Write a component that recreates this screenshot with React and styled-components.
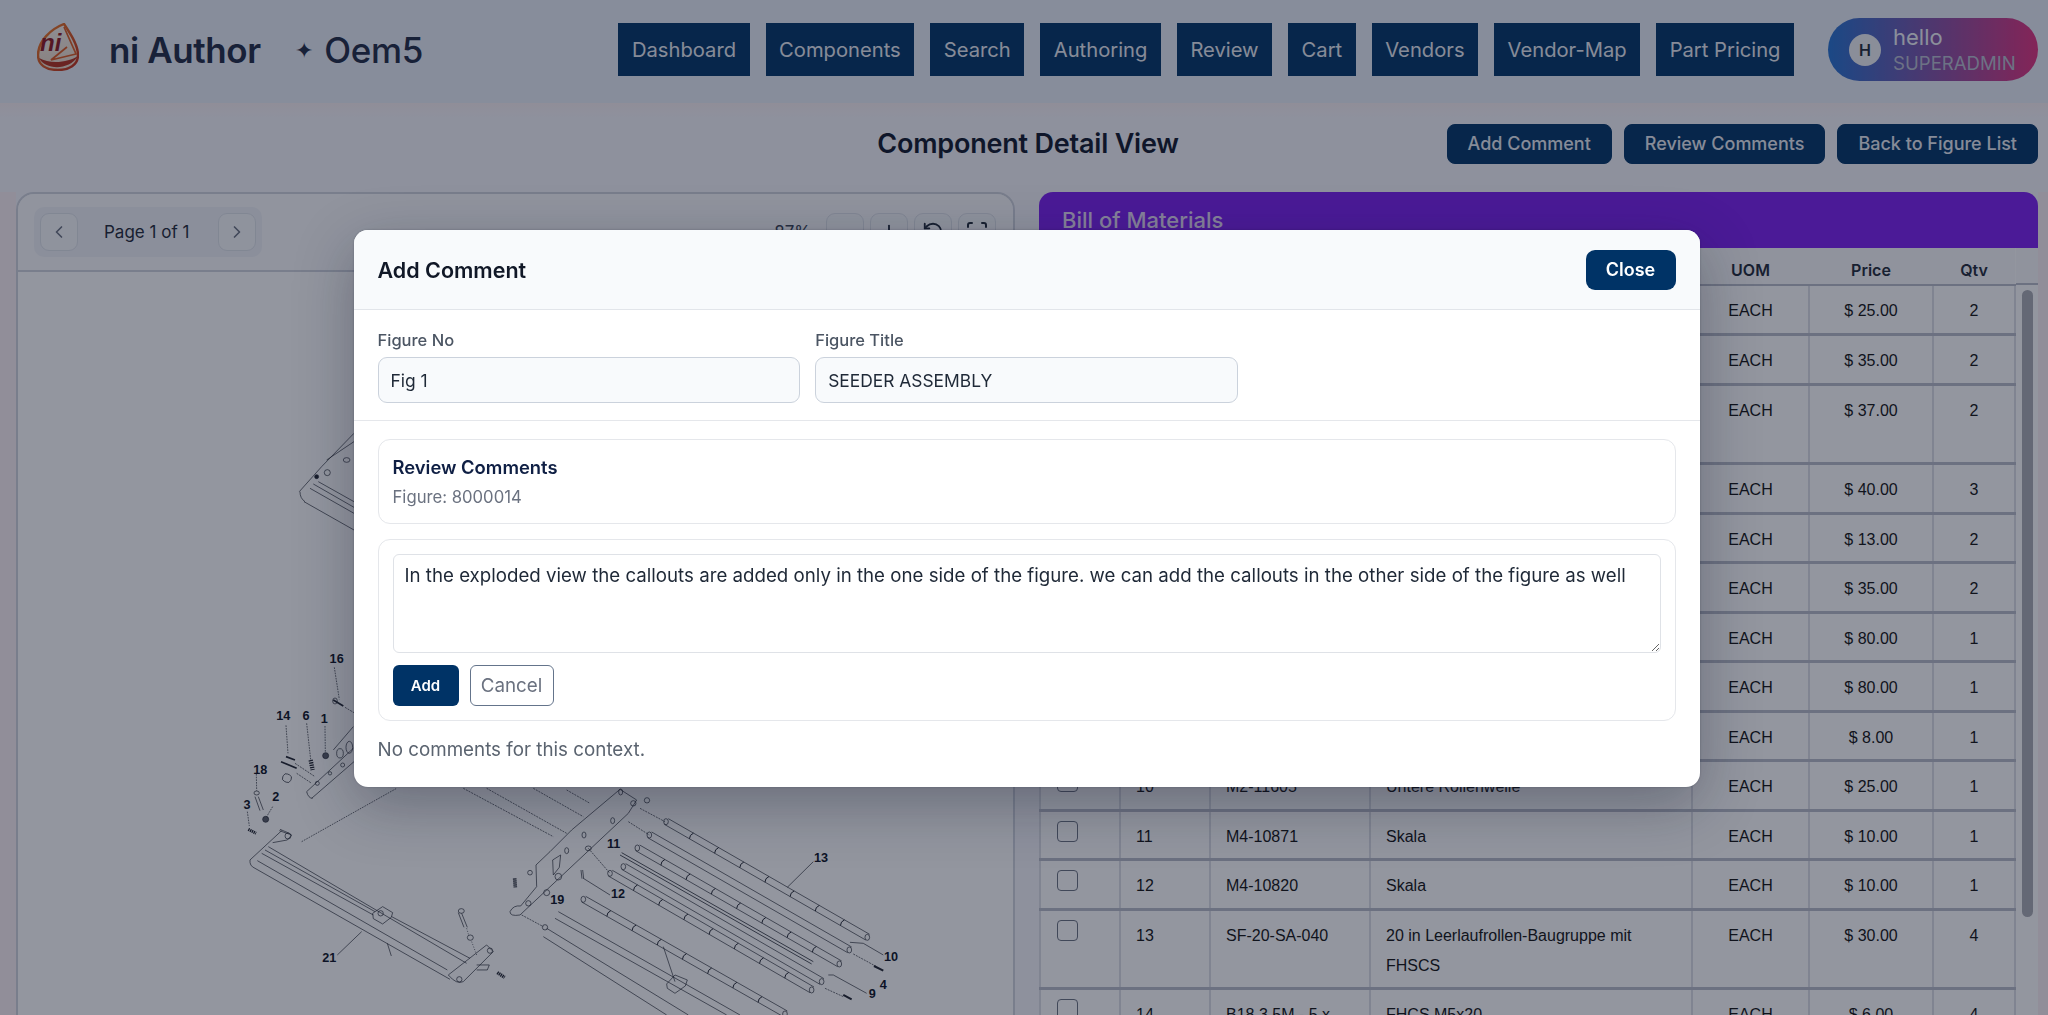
import React from "react";
import styled, { createGlobalStyle } from "styled-components";
import { ChevronLeft, ChevronRight, Minus, Plus, RotateCcw, ScanLine } from "lucide-react";

const GlobalStyle = createGlobalStyle`
  html, body {
    margin: 0;
    height: 100%;
    overflow: hidden;
    background: #fbf1f5;
    font-family: "Inter", "Liberation Sans", sans-serif;
    color: #111827;
  }
  * { box-sizing: border-box; }
`;

const Page = styled.div`
  height: 1015px;
  overflow: hidden;
`;

const Header = styled.header`
  display: flex;
  align-items: center;
  height: 103px;
  padding: 0 10px 4px 37px;
  background: #e9eef7;
`;

const Brand = styled.div`
  display: flex;
  align-items: center;
  flex: 1;
`;

const LogoMark = styled.svg`
  margin-top: -5px;
`;

const BrandName = styled.span`
  margin-left: 30px;
  font-size: 35px;
  font-weight: 600;
  letter-spacing: -0.4px;
  color: #1f2a44;
`;

const Tenant = styled.span`
  display: flex;
  align-items: center;
  gap: 12px;
  margin-left: 34px;
  font-size: 35px;
  font-weight: 500;
  letter-spacing: -0.4px;
  color: #1f2a44;
`;

const TenantStar = styled.span`
  font-size: 22px;
`;

const Nav = styled.nav`
  display: flex;
  gap: 16px;
  margin-right: 34px;
`;

const NavItem = styled.a`
  display: flex;
  align-items: center;
  height: 53px;
  padding: 0 13.5px;
  background: #003366;
  font-size: 20.2px;
  color: #e8ebf2;
`;

const UserPill = styled.div`
  display: flex;
  align-items: center;
  gap: 12px;
  width: 210px;
  height: 63px;
  padding-left: 21px;
  border-radius: 32px;
  background: linear-gradient(90deg, #2572d0 0%, #e2317d 100%);
`;

const Avatar = styled.span`
  display: flex;
  align-items: center;
  justify-content: center;
  width: 32px;
  height: 32px;
  border-radius: 50%;
  background: #eef0f4;
  font-size: 16px;
  font-weight: 600;
  color: #1f2937;
`;

const UserText = styled.div`
  display: flex;
  flex-direction: column;
`;

const UserName = styled.span`
  font-size: 22px;
  line-height: 27px;
  color: #f1f3f8;
`;

const UserRole = styled.span`
  font-size: 18.6px;
  line-height: 25px;
  color: #b9bdd0;
`;

const Main = styled.main`
  padding: 0 10px 0 16px;
`;

const TitleRow = styled.div`
  display: grid;
  grid-template-columns: 1fr auto 1fr;
  align-items: center;
  height: 89px;
  margin: 0 -10px 0 -16px;
  padding: 0 10px 8px 16px;
  background: linear-gradient(180deg, #f9f0f3 0, #f6f6fb 14px);
`;

const PageTitle = styled.h1`
  grid-column: 2;
  margin: 0 0 0 2px;
  font-size: 27px;
  font-weight: 600;
  letter-spacing: -0.2px;
  color: #0f172a;
`;

const TitleActions = styled.div`
  display: flex;
  justify-content: flex-end;
  gap: 12px;
`;

const ActionButton = styled.button`
  height: 40px;
  padding: 0 20px;
  border: 1px solid #003366;
  border-radius: 8px;
  background: #003366;
  font: 500 18px "Inter", sans-serif;
  color: #e8ebf2;
`;

const Columns = styled.div`
  display: grid;
  grid-template-columns: 999px 999px;
  gap: 24px;
  background: #f6f6fb;
`;

const ViewerPanel = styled.section`
  height: 830px;
  border: 2px solid #cfd3dd;
  border-radius: 18px 18px 0 0;
  background: #fff;
  box-shadow: inset 0 0 0 1px #e6e8ee;
  overflow: hidden;
`;

const ViewerToolbar = styled.div`
  display: flex;
  align-items: center;
  justify-content: space-between;
  height: 78px;
  padding: 0 17px 0 16px;
  border-bottom: 2px solid #cfd3dd;
  background: #fbfbfd;
`;

const Pager = styled.div`
  display: flex;
  align-items: center;
  gap: 26px;
  height: 50px;
  padding: 0 6px;
  border-radius: 10px;
  background: #f1f3f8;
`;

const PagerLabel = styled.span`
  width: 88px;
  font-size: 17px;
  white-space: nowrap;
  color: #1f2937;
`;

const IconButton = styled.button`
  display: flex;
  align-items: center;
  justify-content: center;
  width: 38px;
  height: 38px;
  padding: 0;
  border: 1.5px solid #dfe3ea;
  border-radius: 9px;
  background: #f8f9fc;
  color: #1f2937;
`;

const ZoomTools = styled.div`
  display: flex;
  align-items: center;
  gap: 6px;
`;

const ZoomValue = styled.span`
  margin-right: 9px;
  font-size: 17px;
  color: #374151;
`;

const DrawingCanvas = styled.div`
  height: 750px;
  background: #fff;
`;

const BomPanel = styled.section`
  height: 830px;
  overflow: hidden;
`;

const BomTitle = styled.div`
  display: flex;
  align-items: center;
  height: 56px;
  padding-left: 23px;
  border-radius: 14px 14px 0 0;
  background: #7c1ef0;
  font-size: 22px;
  font-weight: 500;
  color: #e6d9f6;
`;

const TableWrap = styled.div`
  display: flex;
  background: #fff;
`;

const BomTable = styled.table`
  width: 975px;
  table-layout: fixed;
  border-collapse: collapse;
  font-family: "Liberation Sans", Arial, sans-serif;
  font-size: 16px;
  line-height: 30px;
  color: #111;
`;

const HeadCell = styled.th`
  height: 37px;
  padding: 7px 8px 0;
  border-bottom: 2px solid #b8bcc8;
  background: #f9fafb;
  font: 600 16px "Inter", sans-serif;
  color: #1f2937;
  text-align: center;
`;

const Cell = styled.td`
  height: ${(props) => (props.$tall ? "79.5px" : "49.5px")};
  padding: 10px 15px 6.5px;
  border: 2px solid #dcdee5;
  border-bottom: 3px solid #b8bcc8;
  text-align: ${(props) => (props.$center ? "center" : "left")};
  vertical-align: top;
`;

const CheckCell = styled(Cell)`
  padding: 9px 0 0 16px;
`;

const RowCheck = styled.input.attrs({ type: "checkbox" })`
  display: block;
  width: 21px;
  height: 21px;
  margin: 0;
  appearance: none;
  border: 1.5px solid #6b7280;
  border-radius: 4px;
  background: #fff;
`;

const ScrollGutter = styled.div`
  width: 22px;
  display: flex;
  flex-direction: column;
`;

const GutterHead = styled.div`
  height: 37px;
  border-bottom: 2px solid #b8bcc8;
  background: #f9fafb;
`;

const ScrollThumb = styled.div`
  width: 11px;
  height: 627px;
  margin: 5px 0 0 6px;
  border-radius: 6px;
  background: #a9abb3;
`;

const Backdrop = styled.div`
  position: fixed;
  inset: 0;
  display: flex;
  align-items: center;
  justify-content: center;
  padding: 2px 0 0 5px;
  background: rgba(15, 23, 42, 0.45);
`;

const Modal = styled.div`
  width: 1346px;
  border-radius: 14px;
  background: #fff;
  box-shadow: 0 18px 60px rgba(15, 23, 42, 0.32), 0 0 2px rgba(15, 23, 42, 0.3);
  overflow: hidden;
`;

const ModalHeader = styled.div`
  display: flex;
  align-items: center;
  justify-content: space-between;
  height: 80px;
  padding: 0 24px;
  border-bottom: 1.5px solid #e2e5ea;
  background: #f8fafc;
`;

const ModalTitle = styled.h2`
  margin: 0;
  font-size: 21.5px;
  font-weight: 600;
  color: #111827;
`;

const CloseButton = styled.button`
  width: 90px;
  height: 40px;
  border: 0;
  border-radius: 9px;
  background: #003366;
  font: 600 18px "Inter", sans-serif;
  color: #fff;
`;

const FieldSection = styled.div`
  display: grid;
  grid-template-columns: repeat(3, 1fr);
  gap: 15px;
  padding: 18px 24px 16.5px;
  border-bottom: 1.5px solid #e5e7eb;
`;

const Field = styled.label`
  display: flex;
  flex-direction: column;
  gap: 5px;
  font-size: 16.5px;
  font-weight: 500;
  line-height: 24px;
  color: #4b5563;
`;

const FieldInput = styled.input`
  height: 46px;
  padding: 0 12px;
  border: 1.5px solid #cbd2dc;
  border-radius: 9px;
  background: #f8fafc;
  font: 400 17.4px "Inter", sans-serif;
  color: #1f2937;
`;

const CommentSection = styled.div`
  display: flex;
  flex-direction: column;
  gap: 15px;
  padding: 18px 24px 24px;
`;

const Card = styled.div`
  padding: 14px;
  border: 1.5px solid #e5e7eb;
  border-radius: 12px;
`;

const CardTitle = styled.div`
  font-size: 18.4px;
  font-weight: 600;
  line-height: 27px;
  color: #0f1f44;
`;

const CardMeta = styled.div`
  margin-top: 4px;
  font-size: 16.7px;
  line-height: 24px;
  color: #6b7280;
`;

const CommentInput = styled.textarea`
  display: block;
  width: 100%;
  height: 99px;
  padding: 9px 11px;
  border: 1.5px solid #dfe2e7;
  border-radius: 6px;
  background: #fff;
  font: 400 18.7px/24px "Inter", sans-serif;
  color: #1f2937;
  outline: none;
`;

const CommentActions = styled.div`
  display: flex;
  gap: 11px;
  margin-top: 12px;
`;

const AddButton = styled.button`
  width: 66px;
  height: 41px;
  border: 0;
  border-radius: 6px;
  background: #003366;
  font: 600 15px "Inter", sans-serif;
  color: #fff;
`;

const CancelButton = styled.button`
  width: 84px;
  height: 41px;
  padding: 0;
  border: 1.5px solid #64748b;
  border-radius: 6px;
  background: #fff;
  font: 400 18.8px "Inter", sans-serif;
  color: #6b7280;
`;

const EmptyNote = styled.p`
  margin: 0;
  font-size: 18.8px;
  line-height: 27px;
  color: #5b6470;
`;

const navItems = ["Dashboard", "Components", "Search", "Authoring", "Review", "Cart", "Vendors", "Vendor-Map", "Part Pricing"];

const rows = [
  { no: "1", uom: "EACH", price: "$ 25.00", qty: "2" },
  { no: "2", uom: "EACH", price: "$ 35.00", qty: "2" },
  { no: "3", uom: "EACH", price: "$ 37.00", qty: "2", tall: true },
  { no: "4", uom: "EACH", price: "$ 40.00", qty: "3" },
  { no: "5", uom: "EACH", price: "$ 13.00", qty: "2" },
  { no: "6", uom: "EACH", price: "$ 35.00", qty: "2" },
  { no: "7", uom: "EACH", price: "$ 80.00", qty: "1" },
  { no: "8", uom: "EACH", price: "$ 80.00", qty: "1" },
  { no: "9", uom: "EACH", price: "$ 8.00", qty: "1" },
  { no: "10", part: "M2-11605", desc: "Untere Rollenwelle", uom: "EACH", price: "$ 25.00", qty: "1" },
  { no: "11", part: "M4-10871", desc: "Skala", uom: "EACH", price: "$ 10.00", qty: "1" },
  { no: "12", part: "M4-10820", desc: "Skala", uom: "EACH", price: "$ 10.00", qty: "1" },
  { no: "13", part: "SF-20-SA-040", desc: "20 in Leerlaufrollen-Baugruppe mit FHSCS", uom: "EACH", price: "$ 30.00", qty: "4" },
  { no: "14", part: "B18.3.5M - 5 x", desc: "FHCS M5x20", uom: "EACH", price: "$ 6.00", qty: "4" },
];

function Logo() {
  return (
    <LogoMark width="42" height="48" viewBox="0 0 42 48">
      <defs>
        <linearGradient id="eggFill" x1="0" y1="0" x2="0" y2="1">
          <stop offset="0" stopColor="#f7f1ea" />
          <stop offset="1" stopColor="#ecd9c6" />
        </linearGradient>
        <linearGradient id="eggRing" x1="0" y1="0" x2="1" y2="1">
          <stop offset="0" stopColor="#f08428" />
          <stop offset="1" stopColor="#c02a18" />
        </linearGradient>
      </defs>
      <path d="M27 1C33 10 41 22 41 32C41 42 32 47 21 47C9 47 1 42 1 32C1 18 14 6 27 1Z" fill="url(#eggFill)" stroke="url(#eggRing)" strokeWidth="2.4" />
      <path d="M2 35C8 47 32 48 41 33C32 39 14 42 2 35Z" fill="#b5301c" />
      <path d="M27 4L39 31L14 37L30 24" fill="none" stroke="#dd5a22" strokeWidth="1.7" />
      <text x="3" y="28" fontFamily="Liberation Sans" fontSize="24" fontWeight="700" fontStyle="italic" fill="#8f1720">ni</text>
    </LogoMark>
  );
}

// one roller of the exploded view, coordinates are in the crop space of the group it sits in
function Roller({ x1, y1, x2, y2, ticks = 0 }) {
  const dx = (x2 - x1) / (ticks + 1);
  const dy = (y2 - y1) / (ticks + 1);
  const marks = Array.from({ length: ticks }, (_, i) => [x1 + dx * (i + 1), y1 + dy * (i + 1)]);
  return (
    <g>
      <path d={`M${x1 + 7} ${y1 - 9}L${x2 + 7} ${y2 - 9}M${x1 - 5} ${y1 + 8}L${x2 - 5} ${y2 + 8}`} />
      <ellipse cx={x1} cy={y1} rx="7" ry="9" />
      <ellipse cx={x2} cy={y2} rx="7" ry="9" />
      {marks.map(([x, y]) => (
        <path key={x} d={`M${x + 7} ${y - 9}Q${x - 5} ${y - 4} ${x - 5} ${y + 8}`} strokeWidth="3" />
      ))}
    </g>
  );
}

function Callout({ x, y, children }) {
  return (
    <text x={x} y={y} textAnchor="middle" dominantBaseline="middle" fontFamily="Liberation Sans" fontSize="38" fontWeight="700" fill="#0c1224" stroke="none">
      {children}
    </text>
  );
}

function Drawing() {
  return (
    <svg width="995" height="750" viewBox="18 272 995 750" fill="none" stroke="#20242f" strokeWidth="2">
      <g transform="translate(0 260) scale(0.3333)">
        <path d="M898 695L965 620L1062 520M980 600L1062 545M912 725L1062 810M900 695Q900 715 915 725M930 685L1062 760M940 672L1062 742M955 665L1062 725" />
        <circle cx="950" cy="650" r="6" fill="#20242f" />
        <circle cx="982" cy="638" r="9" />
        <ellipse cx="1040" cy="600" rx="10" ry="7" />
      </g>
      <g transform="translate(200 620) scale(0.3333)">
        <path d="M165 745L750 1078M150 720Q148 738 165 745M150 720L245 632M172 722L742 1050M185 700L520 885M195 690L525 875M575 890L810 1015M205 680L800 1030" />
        <path d="M518 880L548 860L578 878L574 892L548 912L520 896Z" />
        <circle cx="542" cy="880" r="8" />
        <path d="M485 935L412 1005M562 970L574 1008" />
        <path d="M745 1065L860 975L880 995L790 1085Q770 1095 745 1065Z" />
        <circle cx="778" cy="1078" r="8" />
        <circle cx="870" cy="992" r="8" />
        <path d="M785 880L802 922M775 878L792 922M830 1035L868 1035L862 1050L830 1050" />
        <ellipse cx="784" cy="873" rx="9" ry="7" />
        <ellipse cx="811" cy="953" rx="9" ry="8" />
        <path d="M800 925L806 945M815 965L832 1010" strokeDasharray="3 5" />
        <path d="M892 1058L914 1072" strokeWidth="10" strokeDasharray="4 2" />
        <path d="M238 632L275 645L262 660L218 668M240 628L268 640" />
        <circle cx="264" cy="648" r="9" />
        <path d="M175 530L190 570M165 530L180 572" />
        <ellipse cx="170" cy="519" rx="8" ry="6" />
        <circle cx="197" cy="598" r="9" fill="#5a5d68" />
        <path d="M145 628L168 640" strokeWidth="9" strokeDasharray="4 2" />
        <path d="M305 665L590 505M142 575L148 618M169 462L170 512M218 560L200 590M403 142L418 238M258 316L264 400M320 310L332 418M375 318L376 398" strokeDasharray="5 3" />
        <path d="M258 410L285 420M243 425L290 445" strokeWidth="5" />
        <rect x="248" y="462" width="26" height="24" rx="10" transform="rotate(25 260 474)" />
        <path d="M332 420L338 450" strokeWidth="13" strokeDasharray="4 3" />
        <circle cx="377" cy="407" r="9" fill="#5a5d68" />
        <path d="M320 515L460 385M335 535L462 425M320 515Q325 535 338 535M400 390L460 320" />
        <circle cx="352" cy="490" r="6" /><circle cx="390" cy="460" r="5" /><circle cx="428" cy="435" r="6" />
        <ellipse cx="420" cy="400" rx="10" ry="14" /><ellipse cx="448" cy="382" rx="10" ry="18" />
        <path d="M400 240L430 258" strokeWidth="5" />
        <ellipse cx="405" cy="243" rx="7" ry="9" />
        <path d="M290 460L335 490M285 430L345 470M435 262L462 278M790 505L1060 650M860 505L1100 640M1000 505L1150 590M1100 510L1170 550" strokeDasharray="6 3" />
        <Callout x={410} y={118}>16</Callout>
        <Callout x={250} y={290}>14</Callout>
        <Callout x={318} y={290}>6</Callout>
        <Callout x={373} y={298}>1</Callout>
        <Callout x={181} y={453}>18</Callout>
        <Callout x={227} y={533}>2</Callout>
        <Callout x={141} y={558}>3</Callout>
        <Callout x={388} y={1015}>21</Callout>
      </g>
      <g transform="translate(500 780) scale(0.3333)">
        <path d="M30 395Q40 375 62 378L110 320L108 255L150 215L215 150L360 28L410 60L385 100L60 405Q30 410 30 395Z" />
        <circle cx="85" cy="370" r="8" /><circle cx="140" cy="338" r="9" /><circle cx="175" cy="290" r="10" />
        <ellipse cx="200" cy="212" rx="6" ry="9" /><ellipse cx="252" cy="165" rx="6" ry="9" /><ellipse cx="338" cy="122" rx="6" ry="9" />
        <ellipse cx="265" cy="205" rx="9" ry="7" /><ellipse cx="362" cy="36" rx="6" ry="9" /><ellipse cx="400" cy="70" rx="8" ry="8" />
        <path d="M158 240L182 225L178 262L160 285Z" />
        <circle cx="90" cy="278" r="7" />
        <path d="M44 295L46 322" strokeWidth="11" strokeDasharray="4 2" />
        <path d="M243 270L246 296M248 270L251 296" />
        <circle cx="441" cy="61" r="8" />
        <Roller x1={498} y1={125} x2={1102} y2={472} ticks={7} />
        <Roller x1={448} y1={165} x2={1048} y2={510} />
        <Roller x1={412} y1={204} x2={1018} y2={552} ticks={7} />
        <path d="M360 225L935 552M365 218L940 545" strokeWidth="2.4" />
        <Roller x1={370} y1={260} x2={965} y2={605} />
        <Roller x1={330} y1={280} x2={935} y2={630} ticks={7} />
        <Roller x1={250} y1={358} x2={855} y2={702} ticks={7} />
        <path d="M140 445L565 705M130 470L500 705M175 395L720 705M165 415L680 705" />
        <circle cx="135" cy="442" r="8" />
        <path d="M500 612L525 585L562 600L556 618L525 640L502 625Z" />
        <path d="M490 500L525 605M862 322L940 245M250 295L330 345M1050 487L1090 490L1150 525M985 585L1000 585L1100 640" />
        <path d="M1122 558L1150 572M1030 645L1055 658" strokeWidth="6" />
        <path d="M385 125L448 165M265 205L330 280M65 405L130 440M420 85L495 125" strokeDasharray="6 3" />
        <path d="M1060 522L1130 560M975 625L1030 650" strokeDasharray="6 3" />
        <Callout x={341} y={195}>11</Callout>
        <Callout x={354} y={345}>12</Callout>
        <Callout x={172} y={363}>19</Callout>
        <Callout x={963} y={235}>13</Callout>
        <Callout x={1173} y={533}>10</Callout>
        <Callout x={1150} y={617}>4</Callout>
        <Callout x={1117} y={643}>9</Callout>
      </g>
    </svg>
  );
}

function BomRow({ row }) {
  return (
    <tr>
      <CheckCell $tall={row.tall}><RowCheck /></CheckCell>
      <Cell $tall={row.tall}>{row.no}</Cell>
      <Cell $tall={row.tall}>{row.part}</Cell>
      <Cell $tall={row.tall}>{row.desc}</Cell>
      <Cell $tall={row.tall} $center>{row.uom}</Cell>
      <Cell $tall={row.tall} $center>{row.price}</Cell>
      <Cell $tall={row.tall} $center>{row.qty}</Cell>
    </tr>
  );
}

function AddCommentModal() {
  return (
    <Backdrop>
      <Modal>
        <ModalHeader>
          <ModalTitle>Add Comment</ModalTitle>
          <CloseButton>Close</CloseButton>
        </ModalHeader>
        <FieldSection>
          <Field>
            Figure No
            <FieldInput readOnly value="Fig 1" />
          </Field>
          <Field>
            Figure Title
            <FieldInput readOnly value="SEEDER ASSEMBLY" />
          </Field>
        </FieldSection>
        <CommentSection>
          <Card>
            <CardTitle>Review Comments</CardTitle>
            <CardMeta>Figure: 8000014</CardMeta>
          </Card>
          <Card>
            <CommentInput
              readOnly
              value="In the exploded view the callouts are added only in the one side of the figure. we can add the callouts in the other side of the figure as well"
            />
            <CommentActions>
              <AddButton>Add</AddButton>
              <CancelButton>Cancel</CancelButton>
            </CommentActions>
          </Card>
          <EmptyNote>No comments for this context.</EmptyNote>
        </CommentSection>
      </Modal>
    </Backdrop>
  );
}

export default function App() {
  return (
    <Page>
      <GlobalStyle />
      <Header>
        <Brand>
          <Logo />
          <BrandName>ni Author</BrandName>
          <Tenant><TenantStar>✦</TenantStar>Oem5</Tenant>
        </Brand>
        <Nav>
          {navItems.map((item) => (
            <NavItem key={item}>{item}</NavItem>
          ))}
        </Nav>
        <UserPill>
          <Avatar>H</Avatar>
          <UserText>
            <UserName>hello</UserName>
            <UserRole>SUPERADMIN</UserRole>
          </UserText>
        </UserPill>
      </Header>
      <Main>
        <TitleRow>
          <PageTitle>Component Detail View</PageTitle>
          <TitleActions>
            <ActionButton>Add Comment</ActionButton>
            <ActionButton>Review Comments</ActionButton>
            <ActionButton>Back to Figure List</ActionButton>
          </TitleActions>
        </TitleRow>
        <Columns>
          <ViewerPanel>
            <ViewerToolbar>
              <Pager>
                <IconButton><ChevronLeft size={20} color="#6b7280" /></IconButton>
                <PagerLabel>Page 1 of 1</PagerLabel>
                <IconButton><ChevronRight size={20} color="#6b7280" /></IconButton>
              </Pager>
              <ZoomTools>
                <ZoomValue>87%</ZoomValue>
                <IconButton><Minus size={22} /></IconButton>
                <IconButton><Plus size={22} /></IconButton>
                <IconButton><RotateCcw size={22} /></IconButton>
                <IconButton><ScanLine size={24} /></IconButton>
              </ZoomTools>
            </ViewerToolbar>
            <DrawingCanvas>
              <Drawing />
            </DrawingCanvas>
          </ViewerPanel>
          <BomPanel>
            <BomTitle>Bill of Materials</BomTitle>
            <TableWrap>
              <BomTable>
                <colgroup>
                  <col style={{ width: 80 }} />
                  <col style={{ width: 90 }} />
                  <col style={{ width: 160 }} />
                  <col style={{ width: 322 }} />
                  <col style={{ width: 117 }} />
                  <col style={{ width: 124 }} />
                  <col style={{ width: 82 }} />
                </colgroup>
                <thead>
                  <tr>
                    <HeadCell />
                    <HeadCell>No</HeadCell>
                    <HeadCell>Part No</HeadCell>
                    <HeadCell>Description</HeadCell>
                    <HeadCell>UOM</HeadCell>
                    <HeadCell>Price</HeadCell>
                    <HeadCell>Qtv</HeadCell>
                  </tr>
                </thead>
                <tbody>
                  {rows.map((row) => (
                    <BomRow key={row.no} row={row} />
                  ))}
                </tbody>
              </BomTable>
              <ScrollGutter>
                <GutterHead />
                <ScrollThumb />
              </ScrollGutter>
            </TableWrap>
          </BomPanel>
        </Columns>
      </Main>
      <AddCommentModal />
    </Page>
  );
}
